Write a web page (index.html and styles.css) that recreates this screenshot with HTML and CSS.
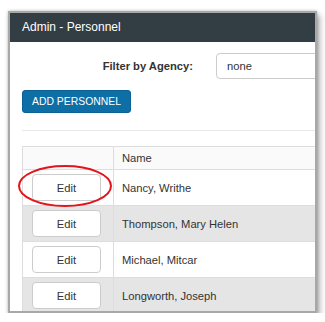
FILE: index.html
```html
<!DOCTYPE html>
<html>

<head>
	<title>Admin - Personnel</title>
	<meta charset="UTF-8">
	<meta name="viewport" content="width=device-width, initial-scale=1.0">
	<link rel="stylesheet" href="styles.css">
</head>

<body>
	<div class="window">
		<div class="header">Admin - Personnel</div>
		<div class="panel">
			<form class="filter">
				<label for="agency">Filter by Agency:</label>
				<div class="select" id="agency">none</div>
			</form>
			<button class="btn-add" type="button">ADD PERSONNEL</button>
			<div class="divider"></div>
			<table>
				<thead>
					<tr>
						<th class="col-edit"></th>
						<th>Name</th>
					</tr>
				</thead>
				<tbody>
					<tr>
						<td class="col-edit"><button class="btn-edit" type="button">Edit</button></td>
						<td>Nancy, Writhe</td>
					</tr>
					<tr class="alt">
						<td class="col-edit"><button class="btn-edit" type="button">Edit</button></td>
						<td>Thompson, Mary Helen</td>
					</tr>
					<tr>
						<td class="col-edit"><button class="btn-edit" type="button">Edit</button></td>
						<td>Michael, Mitcar</td>
					</tr>
					<tr class="alt">
						<td class="col-edit"><button class="btn-edit" type="button">Edit</button></td>
						<td>Longworth, Joseph</td>
					</tr>
				</tbody>
			</table>
		</div>
		<!-- callout drawn over the first edit button -->
		<svg class="callout" width="96" height="44" viewBox="0 0 96 44">
			<ellipse cx="48" cy="22" rx="46" ry="20" fill="none" stroke="#e3141b" stroke-width="2" />
		</svg>
	</div>
</body>

</html>
```

FILE: styles.css
```css
* {
	box-sizing: border-box;
}

body {
	font-family: "Liberation Sans", Arial, sans-serif;
	margin: 0;
	padding: 0;
	background-color: #fff;
	color: #333;
}

.window {
	position: relative;
	margin: 11px 0 0 8px;
	width: 309px;
	height: 302px;
	border: 2px solid #a8a8a8;
	overflow: hidden;
	background-color: #fff;
	box-shadow: 0 0 3px rgba(0, 0, 0, 0.25), 3px 4px 6px rgba(0, 0, 0, 0.3);
}

.header {
	height: 29px;
	line-height: 29px;
	padding-left: 12px;
	background-color: #333d44;
	color: #fff;
	font-size: 12px;
}

.panel {
	padding-left: 12px;
	width: 500px;
}

.filter {
	display: flex;
	align-items: center;
	margin-top: 11px;
}

.filter label {
	width: 171px;
	margin-right: 23px;
	text-align: right;
	font-weight: bold;
	font-size: 11.2px;
}

.select {
	width: 220px;
	height: 26px;
	line-height: 24px;
	padding-left: 10px;
	border: 1px solid #ccc;
	border-radius: 4px;
	font-size: 11.2px;
}

.btn-add {
	display: block;
	margin-top: 11px;
	width: 109px;
	height: 23px;
	padding: 0;
	border: 1px solid #0b6196;
	border-radius: 3px;
	background-color: #0e6ea6;
	color: #fff;
	font-family: inherit;
	font-size: 10.4px;
}

.divider {
	margin-top: 17px;
	border-top: 1px solid #e8e8e8;
	width: 400px;
}

table {
	margin-top: 15px;
	width: 400px;
	border-collapse: collapse;
	font-size: 11.2px;
}

th,
td {
	border: 1px solid #ddd;
	text-align: left;
	padding: 0 0 0 8px;
}

th {
	height: 23px;
	font-weight: normal;
	background-color: #fafafa;
}

td {
	height: 36px;
}

tr.alt td {
	background-color: #e5e5e5;
}

.col-edit {
	width: 91px;
	padding: 0 0 0 9px;
}

.btn-edit {
	display: block;
	width: 69px;
	height: 27px;
	padding: 0;
	border: 1px solid #ccc;
	border-radius: 4px;
	background-color: #fff;
	color: #333;
	font-family: inherit;
	font-size: 11.2px;
}

.callout {
	position: absolute;
	left: 7px;
	top: 151px;
	pointer-events: none;
}
```
